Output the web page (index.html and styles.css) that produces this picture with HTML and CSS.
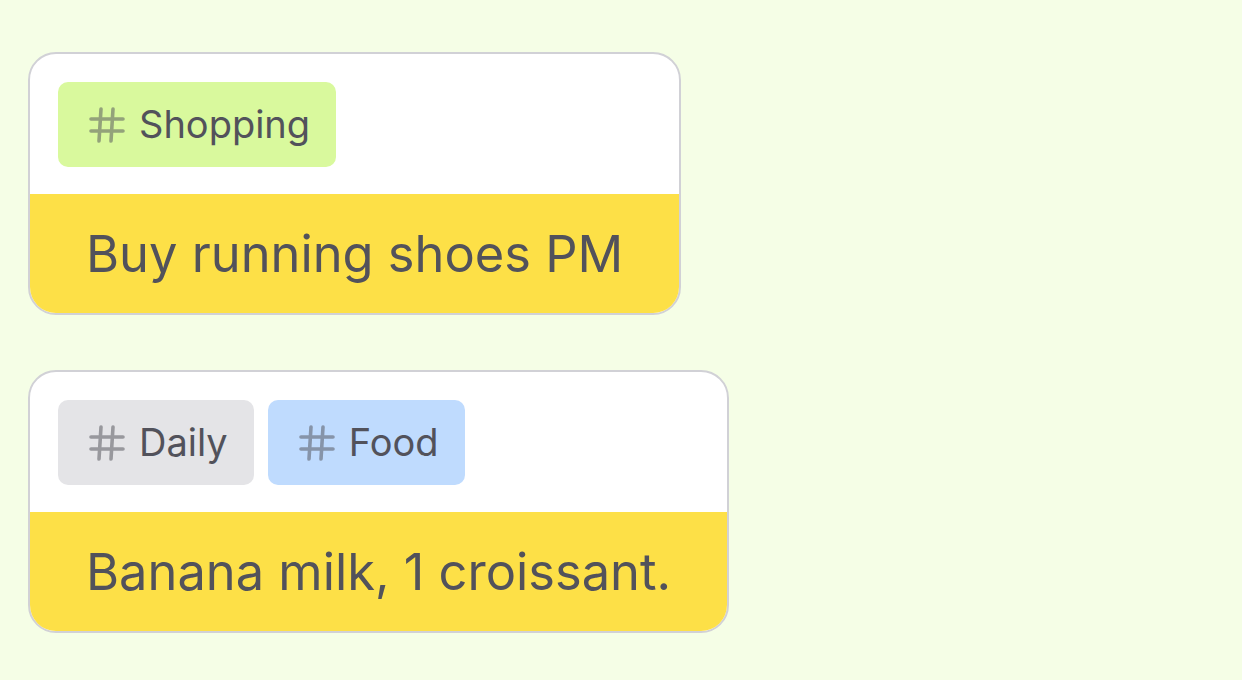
FILE: index.html
```html
<!DOCTYPE html>
<html lang="en">
<head>
<meta charset="utf-8">
<title>Notes</title>
<link rel="stylesheet" href="styles.css">
</head>
<body>
<main class="list">
  <article class="card">
    <div class="tags">
      <span class="tag tag-green">
        <svg class="hash" viewBox="-2 -2 36 36" width="36" height="36"><path d="M10 0 L8 32 M22 0 L20 32 M0 10 H32 M0 22 H32"/></svg>
        <span class="tag-label">Shopping</span>
      </span>
    </div>
    <div class="body">Buy running shoes PM</div>
  </article>
  <article class="card">
    <div class="tags">
      <span class="tag tag-grey">
        <svg class="hash" viewBox="-2 -2 36 36" width="36" height="36"><path d="M10 0 L8 32 M22 0 L20 32 M0 10 H32 M0 22 H32"/></svg>
        <span class="tag-label">Daily</span>
      </span>
      <span class="tag tag-blue">
        <svg class="hash" viewBox="-2 -2 36 36" width="36" height="36"><path d="M10 0 L8 32 M22 0 L20 32 M0 10 H32 M0 22 H32"/></svg>
        <span class="tag-label">Food</span>
      </span>
    </div>
    <div class="body">Banana milk, 1 croissant.</div>
  </article>
</main>
</body>
</html>
```

FILE: styles.css
```css
* { box-sizing: border-box; }

html, body {
  margin: 0;
  padding: 0;
  background: #f5fee6;
}

body {
  font-family: Inter, Roboto, "Liberation Sans", sans-serif;
  color: #52525b;
}

.list {
  display: flex;
  flex-direction: column;
  align-items: flex-start;
  gap: 55px;
  padding: 52px 28px;
}

.card {
  display: flex;
  flex-direction: column;
  border: 2px solid #d1d1d6;
  border-radius: 28px;
  overflow: hidden;
  background: #ffffff;
}

.tags {
  display: flex;
  gap: 14px;
  padding: 28px 28px 27px;
}

.tag {
  display: flex;
  align-items: center;
  gap: 14px;
  height: 85px;
  padding: 0 26px 0 31px;
  border-radius: 10px;
  font-size: 38px;
  line-height: 47px;
}

.tag-green { background: #d9f99d; }
.tag-grey { background: #e4e4e7; }
.tag-blue { background: #bfdbfe; }

.hash {
  display: block;
  flex: none;
  fill: none;
  stroke: rgba(82, 82, 91, 0.52);
  stroke-width: 3.6;
  stroke-linecap: round;
}

.body {
  background: #fde047;
  font-size: 50.6px;
  line-height: 63px;
  padding: 28px 56px;
  white-space: nowrap;
}
```
